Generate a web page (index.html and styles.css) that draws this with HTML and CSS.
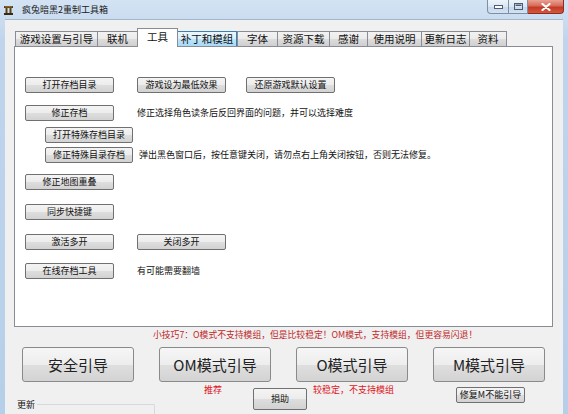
FILE: index.html
```html
<!DOCTYPE html>
<html lang="zh-CN">
<head>
<meta charset="utf-8">
<title>疯兔暗黑2重制工具箱</title>
<link rel="stylesheet" href="styles.css">
</head>
<body>
<div class="win">
  <div class="titlebar">
    <svg class="appicon" width="9" height="9" viewBox="0 0 9 9">
      <rect x="0" y="0" width="9" height="2" fill="#3b2a12"/>
      <rect x="0" y="7" width="9" height="2" fill="#3b2a12"/>
      <rect x="1.5" y="2" width="2" height="5" fill="#5a4218"/>
      <rect x="5.5" y="2" width="2" height="5" fill="#5a4218"/>
      <rect x="0.5" y="0.5" width="8" height="0.8" fill="#c9a23a"/>
    </svg>
    <span class="title">疯兔暗黑2重制工具箱</span>
    <div class="ctrls">
      <span class="ctl min"><svg width="9" height="4" viewBox="0 0 9 4"><rect x="0.5" y="0.5" width="8" height="3" fill="#fff" stroke="#4a5d75" stroke-width="1"/></svg></span>
      <span class="ctl max"><svg width="9" height="7" viewBox="0 0 9 7"><rect x="0.5" y="0.5" width="8" height="6" fill="none" stroke="#4a5d75" stroke-width="1"/><rect x="1.5" y="1.5" width="6" height="1.5" fill="#4a5d75"/></svg></span>
      <span class="ctl close"><svg width="10" height="8" viewBox="0 0 10 8"><path d="M1.5 1 L8.5 7 M8.5 1 L1.5 7" stroke="#fff" stroke-width="2.2" stroke-linecap="round"/></svg></span>
    </div>
  </div>
  <div class="client">
    <div class="tabs">
      <span class="tab">游戏设置与引导</span>
      <span class="tab">联机</span>
      <span class="tab sel">工具</span>
      <span class="tab hot">补丁和模组</span>
      <span class="tab">字体</span>
      <span class="tab">资源下载</span>
      <span class="tab">感谢</span>
      <span class="tab">使用说明</span>
      <span class="tab">更新日志</span>
      <span class="tab">资料</span>
    </div>
    <div class="panel">
      <div class="row r1">
        <span class="btn">打开存档目录</span>
        <span class="btn">游戏设为最低效果</span>
        <span class="btn b3">还原游戏默认设置</span>
      </div>
      <div class="row r2">
        <span class="btn">修正存档</span>
        <span class="lbl">修正选择角色读条后反回界面的问题，并可以选择难度</span>
      </div>
      <div class="row r3">
        <span class="btn ind">打开特殊存档目录</span>
      </div>
      <div class="row r4 tight">
        <span class="btn ind">修正特殊目录存档</span>
        <span class="lbl">弹出黑色窗口后，按任意键关闭，请勿点右上角关闭按钮，否则无法修复。</span>
      </div>
      <div class="row r5">
        <span class="btn">修正地图重叠</span>
      </div>
      <div class="row r6">
        <span class="btn">同步快捷键</span>
      </div>
      <div class="row r7">
        <span class="btn">激活多开</span>
        <span class="btn">关闭多开</span>
      </div>
      <div class="row r8">
        <span class="btn">在线存档工具</span>
        <span class="lbl">有可能需要翻墙</span>
      </div>
    </div>
    <div class="tip">小技巧7：O模式不支持模组，但是比较稳定！OM模式，支持模组，但更容易闪退！</div>
    <div class="big">
      <span class="bbtn">安全引导</span>
      <span class="bbtn">OM模式引导</span>
      <span class="bbtn">O模式引导</span>
      <span class="bbtn">M模式引导</span>
    </div>
    <div class="sub">
      <div class="grp">
        <span class="grp-label">更新</span>
        <span class="grp-line"></span>
      </div>
      <span class="red rec">推荐</span>
      <span class="btn donate">捐助</span>
      <span class="red stable">较稳定，不支持模组</span>
      <span class="btn fix">修复M不能引导</span>
    </div>
  </div>
</div>
</body>
</html>
```
FILE: styles.css
```css
* { box-sizing: border-box; }
html, body { margin: 0; padding: 0; }
body {
  width: 568px;
  height: 414px;
  overflow: hidden;
  font-family: "Noto Sans CJK SC", "Noto Sans", sans-serif;
  color: #000;
}
.win {
  width: 568px;
  height: 414px;
  background: linear-gradient(to bottom, #d3e3f3 0px, #c0d5ec 40px, #b6cfe9 414px);
  display: flex;
  flex-direction: column;
}
.titlebar {
  height: 19px;
  display: flex;
  align-items: center;
  padding-left: 4px;
  flex: none;
}
.appicon { display: block; margin-top: 1px; }
.title {
  font-size: 9px;
  line-height: 12px;
  margin-left: 9px;
  margin-top: 1px;
  color: #1a1a1a;
}
.ctrls {
  margin-left: auto;
  margin-right: 4px;
  align-self: flex-start;
  display: flex;
  height: 14px;
}
.ctl {
  display: flex;
  align-items: center;
  justify-content: center;
  height: 14px;
  border: 1px solid #7b8fa8;
  border-top: none;
  border-left: none;
}
.ctl svg { display: block; }
.min {
  width: 22px;
  border-left: 1px solid #7b8fa8;
  border-bottom-left-radius: 4px;
  background: linear-gradient(to bottom, #eef3fa 0%, #dbe6f3 50%, #c6d6ea 51%, #d4e2f1 100%);
}
.max {
  width: 19px;
  background: linear-gradient(to bottom, #eef3fa 0%, #dbe6f3 50%, #c6d6ea 51%, #d4e2f1 100%);
}
.close {
  width: 36px;
  border-bottom-right-radius: 4px;
  border-color: #8c2d22;
  background: linear-gradient(to bottom, #e9a191 0%, #d8695a 45%, #c23b25 55%, #d5573d 100%);
}
.client {
  flex: 1;
  margin: 0 5px;
  background: #f0f0f0;
  border-top: 1px solid #a6b7c9;
  display: flex;
  flex-direction: column;
}
.tabs {
  display: flex;
  align-items: flex-end;
  height: 15px;
  margin-top: 11px;
  margin-left: 10px;
  position: relative;
  z-index: 1;
}
.tab {
  height: 15px;
  font-size: 10.5px;
  line-height: 14px;
  text-align: center;
  white-space: nowrap;
  overflow: hidden;
  border: 1px solid #898c95;
  border-right: none;
  border-bottom: none;
  background: linear-gradient(to bottom, #f2f2f2 0%, #ebebeb 50%, #dddddd 51%, #cfcfcf 100%);
  color: #111;
}
.tab:last-child { border-right: 1px solid #898c95; }
.tab:nth-child(1) { width: 82px; }
.tab:nth-child(2) { width: 40px; }
.tab:nth-child(3) { width: 41px; }
.tab:nth-child(4) { width: 59px; }
.tab:nth-child(5) { width: 40px; }
.tab:nth-child(6) { width: 52px; }
.tab:nth-child(7) { width: 38px; }
.tab:nth-child(8) { width: 54px; }
.tab:nth-child(9) { width: 48px; }
.tab:nth-child(10) { width: 38px; }
.tab.sel {
  height: 19px;
  margin-bottom: -1px;
  background: #fff;
  border-right: 1px solid #898c95;
  line-height: 16px;
}
.tab.sel + .tab { border-left: none; }
.tab.hot {
  background: linear-gradient(to bottom, #eaf6fd 0%, #d9f0fc 50%, #bee6fd 51%, #a7d9f5 100%);
  border-color: #3c7fb1;
  border-right: 1px solid #3c7fb1;
}
.panel {
  margin-left: 9px;
  width: 539px;
  height: 281px;
  background: #fff;
  border: 1px solid #898c95;
  padding-left: 10px;
}
.row {
  display: flex;
  align-items: center;
  gap: 23px;
  height: 16px;
}
.row.tight { gap: 6px; }
.r1 { margin-top: 30px; }
.r2 { margin-top: 12px; }
.r3 { margin-top: 6px; }
.r4 { margin-top: 4px; }
.r5 { margin-top: 11px; }
.r6 { margin-top: 14px; }
.r7 { margin-top: 14px; }
.r8 { margin-top: 13px; }
.btn {
  display: flex;
  align-items: center;
  justify-content: center;
  width: 89px;
  height: 16px;
  font-size: 9px;
  line-height: 12px;
  white-space: nowrap;
  border: 1px solid #707070;
  border-radius: 2px;
  background: linear-gradient(to bottom, #f4f4f4 0%, #ececec 50%, #dedede 51%, #d2d2d2 100%);
  color: #111;
  flex: none;
}
.btn.b3 { margin-left: -3px; }
.btn.ind { margin-left: 20px; width: 88px; }
.lbl {
  font-size: 9px;
  line-height: 12px;
  white-space: nowrap;
  color: #111;
}
.tip {
  margin-top: 2px;
  height: 12px;
  font-size: 8.8px;
  line-height: 12px;
  padding-left: 148px;
  color: #c0282a;
  white-space: nowrap;
}
.big {
  display: flex;
  margin-top: 6px;
  padding-left: 17px;
  gap: 25px;
}
.bbtn {
  display: flex;
  align-items: center;
  justify-content: center;
  width: 112px;
  height: 35px;
  font-size: 15px;
  color: #222;
  border: 1px solid #8a8a8a;
  border-radius: 3px;
  background: linear-gradient(to bottom, #f6f6f6 0%, #ededed 50%, #dfdfdf 51%, #d3d3d3 100%);
  white-space: nowrap;
}
.sub {
  display: flex;
  align-items: flex-start;
  margin-top: 2px;
}
.grp {
  display: flex;
  align-items: flex-start;
  margin-left: 12px;
  width: 138px;
  margin-top: 15px;
}
.grp-label {
  font-size: 9px;
  line-height: 12px;
  color: #111;
}
.grp-line {
  flex: 1;
  margin-left: 2px;
  margin-top: 5px;
  height: 20px;
  border-top: 1px solid #d5d9de;
  border-right: 1px solid #d5d9de;
  border-top-right-radius: 2px;
}
.red {
  font-size: 9px;
  line-height: 12px;
  color: #e0141c;
  white-space: nowrap;
}
.rec { margin-left: 49px; width: 18px; }
.btn.donate {
  margin-left: 31px;
  margin-top: 4px;
  width: 54px;
  height: 22px;
}
.stable { margin-left: 6px; width: 80px; }
.btn.fix {
  margin-left: 63px;
  margin-top: 3px;
  width: 69px;
  height: 16px;
}
```
